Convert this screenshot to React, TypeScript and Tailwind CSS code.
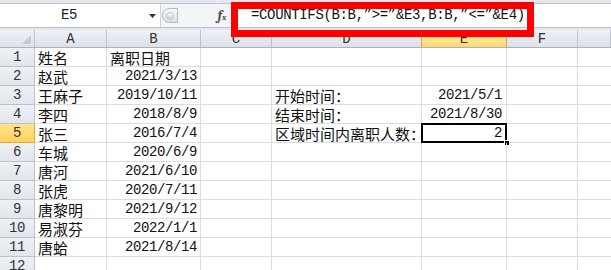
import React from "react";

const cjk = { fontFamily: '"Noto Sans CJK SC", "Noto Sans CJK TC", sans-serif' };
const mono = { fontFamily: '"Liberation Mono", "DejaVu Sans Mono", monospace' };

type Row = [string, string, string, string];

const rows: Row[] = [
  ["姓名", "离职日期", "", ""],
  ["赵武", "2021/3/13", "", ""],
  ["王麻子", "2019/10/11", "开始时间：", "2021/5/1"],
  ["李四", "2018/8/9", "结束时间：", "2021/8/30"],
  ["张三", "2016/7/4", "区域时间内离职人数：", "2"],
  ["车城", "2020/6/9", "", ""],
  ["唐河", "2021/6/10", "", ""],
  ["张虎", "2020/7/11", "", ""],
  ["唐黎明", "2021/9/12", "", ""],
  ["易淑芬", "2022/1/1", "", ""],
  ["唐蛤", "2021/8/14", "", ""],
  ["", "", "", ""],
];

const cols = "grid grid-cols-[35px_72px_94px_71px_150px_85px_71px_1fr]";

function Cjk({ t }: { t: string }) {
  return (
    <span style={cjk} className="text-[15px] leading-none text-[#111] whitespace-nowrap">
      {t}
    </span>
  );
}

function Num({ t }: { t: string }) {
  return (
    <span style={mono} className="text-[14px] leading-none tracking-[-0.4px] text-[#111] whitespace-nowrap">
      {t}
    </span>
  );
}

export default function App() {
  return (
    <div className="relative w-[611px] h-[270px] overflow-hidden bg-white select-none">
      {/* top strip */}
      <div className="h-[3px] bg-[#e4e8ee] flex">
        <div className="w-[217px]" />
        <div className="w-px bg-[#f7f8fa]" />
      </div>
      <div className="h-px bg-[#b9c1cc]" />
      {/* formula bar row */}
      <div className="h-[23px] flex bg-[#f3f4f6]">
        <div className="w-[161px] bg-white flex items-center relative border-r border-[#d0d4da]">
          <span style={mono} className="flex-1 text-center text-[14px] tracking-[-0.4px] text-[#222] pr-[22px]">
            E5
          </span>
          <svg className="absolute left-[149px] top-[10px]" width="7" height="4" viewBox="0 0 7 4">
            <path d="M0 0 L7 0 L3.5 4 Z" fill="#333" />
          </svg>
        </div>
        <div className="w-[18px] flex items-center justify-start">
          <div className="ml-[1px] w-[16px] h-[15px] rounded-l-full border border-[#b3b9c2] bg-gradient-to-b from-[#f7f7f7] to-[#dcdfe3] flex items-center justify-center">
            <div className="w-[8px] h-[8px] rounded-full bg-gradient-to-b from-[#ffffff] to-[#c8ccd2] border border-[#c3c8cf]" />
          </div>
        </div>
        <div className="w-[52px] flex items-center justify-end pr-[5px]">
          <span className="font-serif italic font-bold text-[13px] text-[#444] leading-none">
            f<span className="text-[8px] align-baseline">x</span>
          </span>
        </div>
        <div className="flex-1 bg-white border-l border-[#c8ccd2] flex items-center pl-[19px]">
          <span style={mono} className="text-[14px] tracking-[-0.35px] text-[#111] whitespace-nowrap">
            =COUNTIFS(B:B,”&gt;=”&amp;E3,B:B,”&lt;=”&amp;E4)
          </span>
        </div>
      </div>
      <div className="h-px bg-[#b9c1cc]" />
      <div className="h-[2px] bg-[#e4e8ee]" />

      {/* column headers */}
      <div className={`${cols} h-[18px] bg-gradient-to-b from-[#eef1f5] to-[#dde2e8] border-b border-[#a9b2bd]`}>
        <div className="relative border-r border-[#bcc3cc]">
          <svg className="absolute right-[3px] bottom-[3px]" width="9" height="9" viewBox="0 0 9 9">
            <path d="M9 0 L9 9 L0 9 Z" fill="#c4cad2" />
          </svg>
        </div>
        {["A", "B", "C", "D", "E", "F", ""].map((c, i) => (
          <div
            key={i}
            className={
              c === "E"
                ? "flex items-center justify-center bg-gradient-to-b from-[#fff0b0] to-[#ffd970] border-r border-l border-[#e0a83a] -ml-px"
                : "flex items-center justify-center border-r border-[#bcc3cc]"
            }
          >
            <span style={mono} className="text-[14px] leading-none text-[#333]">
              {c}
            </span>
          </div>
        ))}
      </div>

      {/* rows */}
      {rows.map((r, i) => {
        const sel = i === 4;
        return (
          <div key={i} className={`${cols} h-[19px]`}>
            <div
              className={
                sel
                  ? "flex items-center justify-center bg-gradient-to-b from-[#ffe48a] to-[#ffd25a] border-r border-b border-[#e0a83a]"
                  : "flex items-center justify-center bg-gradient-to-b from-[#eef1f5] to-[#e2e6ec] border-r border-b border-[#bcc3cc]"
              }
            >
              <span style={mono} className="text-[14px] leading-none text-[#333] tracking-[-0.4px]">
                {i + 1}
              </span>
            </div>
            <div className="flex items-center pl-[3px] border-r border-b border-[#dadcdf]">
              {r[0] && <Cjk t={r[0]} />}
            </div>
            <div
              className={`flex items-center border-r border-b border-[#dadcdf] ${
                i === 0 ? "pl-[3px]" : "justify-end pr-[3px]"
              }`}
            >
              {r[1] && (i === 0 ? <Cjk t={r[1]} /> : <Num t={r[1]} />)}
            </div>
            <div className="border-r border-b border-[#dadcdf]" />
            <div className="flex items-center pl-[3px] border-r border-b border-[#dadcdf] overflow-visible">
              {r[2] && <Cjk t={r[2]} />}
            </div>
            <div className="relative flex items-center justify-end pr-[4px] border-r border-b border-[#dadcdf]">
              {r[3] && <Num t={r[3]} />}
              {sel && (
                <>
                  <div className="absolute left-[-1px] top-[-1px] right-[-1px] bottom-[-1px] border-2 border-black" />
                  <div className="absolute right-[-4px] bottom-[-4px] w-[6px] h-[6px] bg-black border border-white" />
                </>
              )}
            </div>
            <div className="border-r border-b border-[#dadcdf]" />
            <div className="border-b border-[#dadcdf]" />
          </div>
        );
      })}

      {/* red annotation box */}
      <div className="absolute left-[231px] top-[2px] w-[303px] h-[35px] border-[7px] border-[#ff0000]" />
    </div>
  );
}
